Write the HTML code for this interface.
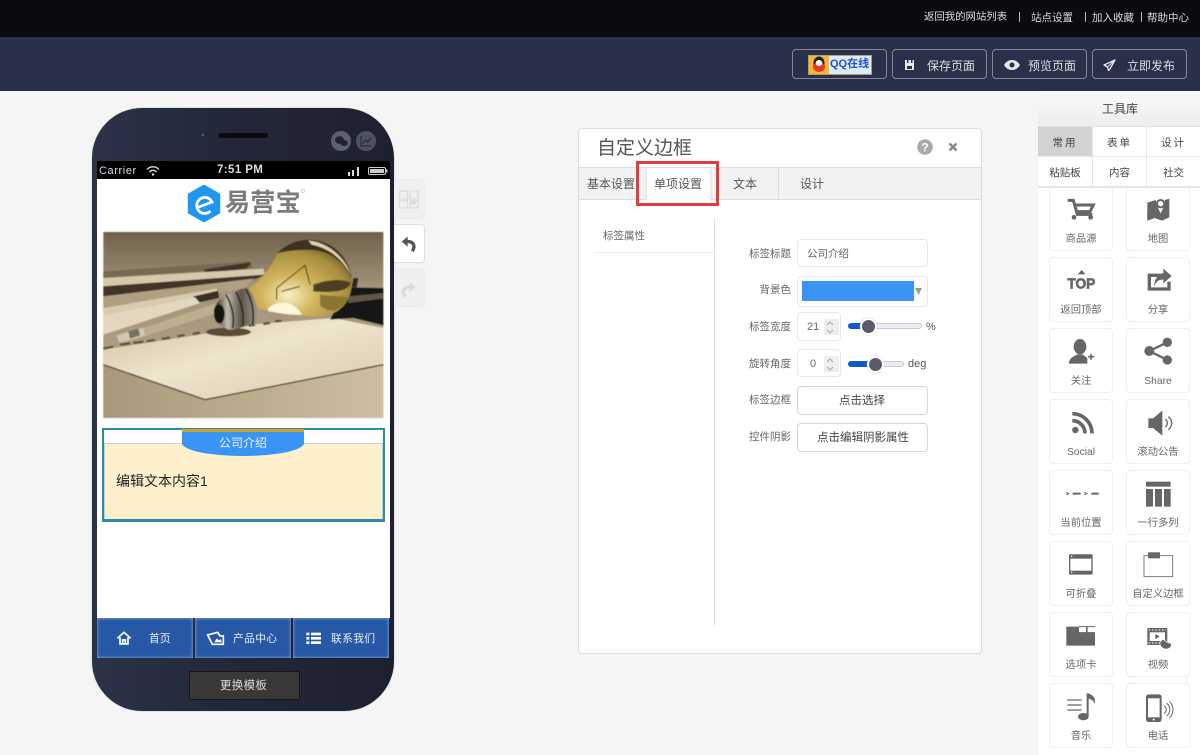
<!DOCTYPE html>
<html lang="zh">
<head>
<meta charset="utf-8">
<title>自定义边框</title>
<style>
*{box-sizing:border-box}
html,body{margin:0;padding:0}
body{position:relative;width:1200px;height:755px;overflow:hidden;background:#f5f5f5;font-family:"Liberation Sans","Noto Sans CJK SC",sans-serif;color:#555}
.a{position:absolute}
.t{position:absolute;white-space:nowrap;line-height:1}
.btn{position:absolute;top:49px;width:95px;height:30px;border:1px solid rgba(255,255,255,.42);border-radius:4px}
.lab{position:absolute;left:720px;width:71px;text-align:right;font-size:10.5px;color:#666;line-height:14px;white-space:nowrap}
.box{position:absolute;background:#fff;border:1px solid #e6e6e6;border-radius:4px}
.item{position:absolute;width:64px;height:65px;background:#fff;border:1px solid #efefef;border-radius:4px}
.item span{position:absolute;left:-4px;right:-4px;top:46px;text-align:center;font-size:10.3px;line-height:14px;color:#666;white-space:nowrap}
.tc{position:absolute;text-align:center;font-size:10.5px;color:#444;background:#fff;white-space:nowrap}
.nav{position:absolute;top:618px;height:40px;background:#2658a5;box-shadow:inset 0 0 3px #9db8df}
</style>
</head>
<body>

<!-- top bars -->
<div class="a" style="left:0;top:0;width:1200px;height:38px;background:#0a0b0e"></div>
<div class="a" style="left:0;top:37px;width:1200px;height:54px;background:#2b304a"></div>
<div class="t" style="left:924px;top:13px;font-size:10.4px;color:#ddd">返回我的网站列表</div>
<div class="t" style="left:1031px;top:13px;font-size:10.5px;color:#ddd">站点设置</div>
<div class="t" style="left:1092px;top:13px;font-size:10.5px;color:#ddd">加入收藏</div>
<div class="t" style="left:1147px;top:13px;font-size:10.5px;color:#ddd">帮助中心</div>
<div class="a" style="left:1019px;top:12px;width:1px;height:10px;background:#bbb"></div>
<div class="a" style="left:1085px;top:12px;width:1px;height:10px;background:#bbb"></div>
<div class="a" style="left:1141px;top:12px;width:1px;height:10px;background:#bbb"></div>

<div class="btn" style="left:792px"></div>
<div class="btn" style="left:892px"></div>
<div class="btn" style="left:992px"></div>
<div class="btn" style="left:1092px"></div>
<div class="a" style="left:808px;top:55px;width:64px;height:20px;background:#d8ecfa;border:1px solid #b0a070"></div>
<div class="a" style="left:809px;top:56px;width:20px;height:18px;background:#f4b73a"></div>
<div class="t" style="left:830px;top:59px;font-size:11px;font-weight:bold;color:#2c4fbd">QQ在线</div>
<div class="t" style="left:927px;top:60px;font-size:12px;color:#ddd">保存页面</div>
<div class="t" style="left:1028px;top:60px;font-size:12px;color:#ddd">预览页面</div>
<div class="t" style="left:1127px;top:60px;font-size:12px;color:#ddd">立即发布</div>

<!-- phone -->
<div class="a" style="left:92px;top:108px;width:302px;height:603px;border-radius:50px;background:linear-gradient(90deg,#2c3349 0%,#23283a 40%,#1d2030 100%);box-shadow:0 0 1px #888"></div>
<div class="a" style="left:97px;top:161px;width:293px;height:18px;background:#000"></div>
<div class="a" style="left:97px;top:179px;width:293px;height:439px;background:#fff"></div>
<div class="t" style="left:99px;top:166px;font-size:11px;color:#ddd;letter-spacing:.6px">Carrier</div>
<div class="t" style="left:217px;top:165px;font-size:11.5px;font-weight:bold;color:#ddd;letter-spacing:.4px">7:51 PM</div>

<!-- logo text -->
<div class="t" style="left:225px;top:191px;font-size:25px;font-weight:bold;color:#7b7b7b;letter-spacing:.3px">易营宝</div>

<!-- photo -->
<svg class="a" style="left:100px;top:228px" width="290" height="195" viewBox="0 0 870 585">
<defs>
<filter id="bl" x="-5%" y="-5%" width="110%" height="110%"><feGaussianBlur stdDeviation="1.8"/></filter>
<linearGradient id="bg" x1="0" y1="0" x2="0" y2="1"><stop offset="0" stop-color="#6f614a"/><stop offset=".3" stop-color="#a3947a"/><stop offset="1" stop-color="#b8a98c"/></linearGradient>
<linearGradient id="pp" x1="0" y1="0" x2="1" y2="1"><stop offset="0" stop-color="#cfc0a2"/><stop offset=".45" stop-color="#efe5cd"/><stop offset="1" stop-color="#d6c8ab"/></linearGradient>
<linearGradient id="tb" x1="0" y1="0" x2="1" y2="0"><stop offset="0" stop-color="#a9997a"/><stop offset="1" stop-color="#cdbea2"/></linearGradient>
<radialGradient id="bu" cx=".4" cy=".72" r=".75"><stop offset="0" stop-color="#fbf0c4"/><stop offset=".35" stop-color="#d2b45c"/><stop offset=".75" stop-color="#a88e3e"/><stop offset="1" stop-color="#5b4a24"/></radialGradient>
<linearGradient id="sc" x1="0" y1="0" x2="1" y2="0"><stop offset="0" stop-color="#1c1812"/><stop offset=".3" stop-color="#c4bba8"/><stop offset=".6" stop-color="#5c5648"/><stop offset="1" stop-color="#a89e88"/></linearGradient>
</defs>
<g filter="url(#bl)">
<rect x="10" y="12" width="840" height="558" fill="url(#bg)"/>
<rect x="10" y="400" width="840" height="170" fill="url(#tb)"/>
<polygon points="10,130 450,100 460,120 10,150" fill="#776a52"/>
<polygon points="310,125 455,102 440,122 320,135" fill="#3f3626"/>
<polygon points="10,150 490,122 495,140 10,175" fill="#d6c8aa"/>
<polygon points="10,175 495,140 470,152 10,205" fill="#3f3626"/>
<polygon points="10,205 460,152 430,185 10,240" fill="#b09f80"/>
<polygon points="10,240 350,182 358,195 10,262" fill="#d8cbae"/>
<polygon points="280,205 355,188 358,210 290,225" fill="#3a3226"/>
<polygon points="10,262 285,208 300,225 10,320" fill="#e3d8bf"/>
<polygon points="60,325 350,225 350,255 70,345" fill="#bdae90"/>
<polygon points="50,322 130,298 135,322 58,345" fill="#cfc6b3"/>
<polygon points="85,310 115,302 120,322 90,332" fill="#77705f"/>
<polygon points="10,365 300,320 450,290 700,270 850,300 850,410 315,515 10,410" fill="url(#pp)"/>
<polyline points="10,410 315,515 850,410" fill="none" stroke="#4b3f2a" stroke-width="4"/>
<polygon points="690,275 740,178 850,180 850,292 760,270" fill="#191714"/>
<polygon points="745,205 850,195 850,212 745,225" fill="#5f574a"/>
<polygon points="760,150 775,150 770,178 755,178" fill="#2d281f"/>
<ellipse cx="385" cy="312" rx="68" ry="13" fill="#5a4c34"/>
<path d="M10 362 l30 -6 M60 350 l30 -4 M100 345 l30 -4 M140 340 l25 -4 M185 333 l25 -4 M232 325 l22 -4 M278 318 l22 -4 M445 293 l20 -3 M490 288 l20 -3 M525 280 l20 -2" stroke="#5b4d35" stroke-width="7" fill="none"/>
<path d="M440 185C485 155 510 125 530 80C560 42 610 30 650 38C720 50 760 110 755 175C750 240 690 275 630 265C590 262 535 248 478 245C468 225 450 205 440 185Z" fill="url(#bu)"/>
<path d="M532 76C565 40 615 30 650 38C705 48 745 92 755 150C730 100 690 70 640 66C595 64 560 68 532 76Z" fill="#3d3220"/>
<path d="M625 38C680 42 735 85 752 140C725 92 690 62 635 50Z" fill="#e0d3aa"/>
<path d="M640 170C680 155 730 150 752 165C745 190 700 195 640 190Z" fill="#4d4020"/>
<path d="M660 200C695 205 730 205 745 208C725 245 695 262 660 232Z" fill="#8a7432"/>
<path d="M505 240C540 212 590 225 605 260C560 262 530 252 505 250Z" fill="#fff8de"/>
<path d="M530 180L615 112 630 170M530 180V215M545 190L600 175" stroke="#3a3018" stroke-width="3" fill="none"/>
<path d="M342 245C350 215 375 195 442 178C465 205 480 250 476 285C440 290 410 308 385 305C360 295 338 268 342 245Z" fill="url(#sc)"/>
<path d="M378 200C398 235 403 270 398 300M408 192C428 230 433 265 428 295M438 184C458 220 463 255 458 288" stroke="#2a251c" stroke-width="5" fill="none"/>
<ellipse cx="358" cy="258" rx="16" ry="28" fill="#17140f"/>
</g>
</svg>

<!-- tab component -->
<div class="a" style="left:102px;top:428px;width:283px;height:94px;border:2px solid #2a8da5;border-bottom-width:3px;background:#fff"></div>
<div class="a" style="left:104px;top:443px;width:279px;height:76px;background:#fff0cc;border:1px solid #c3cfe0;border-bottom:0"></div>
<div class="a" style="left:182px;top:429px;width:122px;height:27px;background:#3994f5;border-radius:0 0 61px 61px/0 0 13px 13px"></div>
<div class="a" style="left:182px;top:429px;width:122px;height:3px;background:#cda52a"></div>
<div class="t" style="left:219px;top:437px;font-size:12px;color:#eef5ff">公司介绍</div>
<div class="t" style="left:116px;top:474px;font-size:14px;color:#222">编辑文本内容1</div>

<!-- phone nav -->
<div class="nav" style="left:97px;width:96px"></div>
<div class="nav" style="left:195px;width:96px"></div>
<div class="nav" style="left:293px;width:96px"></div>
<div class="t" style="left:149px;top:634px;font-size:10.8px;color:#e8eef8">首页</div>
<div class="t" style="left:233px;top:634px;font-size:10.8px;color:#e8eef8;letter-spacing:.3px">产品中心</div>
<div class="t" style="left:331px;top:634px;font-size:10.8px;color:#e8eef8;letter-spacing:.3px">联系我们</div>

<div class="a" style="left:189px;top:671px;width:111px;height:29px;background:#3a3836;border:1px solid #15151a;border-radius:2px"></div>
<div class="t" style="left:220px;top:681px;font-size:11.5px;color:#ddd;letter-spacing:.3px">更换模板</div>

<!-- side buttons -->
<div class="a" style="left:394px;top:179px;width:31px;height:40px;background:#f0f0f0;border:1px solid #ebebeb;border-left:0;border-radius:0 4px 4px 0"></div>
<div class="a" style="left:394px;top:224px;width:31px;height:39px;background:#fff;border:1px solid #ddd;border-left:0;border-radius:0 4px 4px 0"></div>
<div class="a" style="left:394px;top:268px;width:31px;height:39px;background:#f0f0f0;border:1px solid #ebebeb;border-left:0;border-radius:0 4px 4px 0"></div>

<!-- dialog -->
<div class="a" style="left:578px;top:128px;width:404px;height:526px;background:#fff;border:1px solid #ddd;border-radius:4px"></div>
<div class="t" style="left:597px;top:139px;font-size:19px;color:#555">自定义边框</div>
<div class="a" style="left:579px;top:167px;width:402px;height:33px;background:#f2f2f2;border-top:1px solid #ddd;border-bottom:1px solid #ddd"></div>
<div class="a" style="left:778px;top:168px;width:1px;height:31px;background:#ddd"></div>
<div class="a" style="left:645px;top:168px;width:67px;height:32px;background:#fff;border-left:2px solid #e8e8e8;border-right:2px solid #e8e8e8"></div>
<div class="t" style="left:587px;top:178px;font-size:12px;color:#555">基本设置</div>
<div class="t" style="left:654px;top:178px;font-size:12px;color:#555">单项设置</div>
<div class="t" style="left:733px;top:178px;font-size:12px;color:#555">文本</div>
<div class="t" style="left:800px;top:178px;font-size:12px;color:#555">设计</div>
<div class="a" style="left:636px;top:161px;width:83px;height:45px;border:3px solid #e23c3c"></div>
<div class="t" style="left:603px;top:231px;font-size:10.5px;color:#666">标签属性</div>
<div class="a" style="left:595px;top:252px;width:119px;height:1px;background:#e8e8e8"></div>
<div class="a" style="left:714px;top:218px;width:1px;height:408px;background:#ddd"></div>

<div class="lab" style="top:247px">标签标题</div>
<div class="box" style="left:797px;top:239px;width:131px;height:28px"></div>
<div class="t" style="left:807px;top:249px;font-size:10.5px;color:#666">公司介绍</div>
<div class="lab" style="top:283px">背景色</div>
<div class="box" style="left:797px;top:276px;width:131px;height:31px"></div>
<div class="a" style="left:802px;top:281px;width:112px;height:20px;background:#3a94f5;border-radius:1px"></div>
<div class="lab" style="top:320px">标签宽度</div>
<div class="box" style="left:797px;top:312px;width:44px;height:29px"></div>
<div class="t" style="left:807px;top:322px;font-size:11px;color:#666">21</div>
<div class="a" style="left:824px;top:319px;width:15px;height:16px;background:#eee"></div>
<div class="lab" style="top:357px">旋转角度</div>
<div class="box" style="left:797px;top:349px;width:44px;height:28px"></div>
<div class="t" style="left:810px;top:359px;font-size:11px;color:#666">0</div>
<div class="a" style="left:824px;top:356px;width:15px;height:16px;background:#eee"></div>

<div class="a" style="left:848px;top:323px;width:74px;height:6px;background:#ececf2;border:1px solid #c9c9d4;border-radius:3px"></div>
<div class="a" style="left:848px;top:323px;width:20px;height:6px;background:#0f5cc8;border-radius:3px"></div>
<div class="a" style="left:860px;top:318px;width:17px;height:17px;background:#5a5a6b;border:2px solid #fff;border-radius:50%;box-shadow:0 0 1px #999"></div>
<div class="t" style="left:926px;top:322px;font-size:11px;color:#555">%</div>
<div class="a" style="left:848px;top:361px;width:56px;height:6px;background:#ececf2;border:1px solid #c9c9d4;border-radius:3px"></div>
<div class="a" style="left:848px;top:361px;width:27px;height:6px;background:#0f5cc8;border-radius:3px"></div>
<div class="a" style="left:867px;top:356px;width:17px;height:17px;background:#5a5a6b;border:2px solid #fff;border-radius:50%;box-shadow:0 0 1px #999"></div>
<div class="t" style="left:908px;top:359px;font-size:11px;color:#555">deg</div>

<div class="lab" style="top:393px">标签边框</div>
<div class="box" style="left:797px;top:386px;width:131px;height:29px;border-color:#d5d5d5"></div>
<div class="t" style="left:839px;top:396px;font-size:11.5px;color:#444">点击选择</div>
<div class="lab" style="top:430px">控件阴影</div>
<div class="box" style="left:797px;top:423px;width:131px;height:29px;border-color:#d5d5d5"></div>
<div class="t" style="left:817px;top:433px;font-size:11.5px;color:#444">点击编辑阴影属性</div>

<!-- tool panel -->
<div class="a" style="left:1038px;top:91px;width:162px;height:664px;background:#fff"></div>
<div class="a" style="left:1038px;top:91px;width:162px;height:36px;background:linear-gradient(#f8f8f8,#eeeeee);border-bottom:1px solid #e2e2e2"></div>
<div class="t" style="left:1102px;top:103px;font-size:12px;color:#444">工具库</div>
<div class="a" style="left:1038px;top:127px;width:162px;height:61px;background:#e6e6e6"></div>
<div class="tc" style="left:1038px;top:127px;width:54px;height:29px;line-height:33px;background:#d2d2d2;letter-spacing:2px">常用</div>
<div class="tc" style="left:1093px;top:127px;width:53px;height:29px;line-height:33px;letter-spacing:2px">表单</div>
<div class="tc" style="left:1147px;top:127px;width:53px;height:29px;line-height:33px;letter-spacing:2px">设计</div>
<div class="tc" style="left:1038px;top:157px;width:54px;height:30px;line-height:33px">粘贴板</div>
<div class="tc" style="left:1093px;top:157px;width:53px;height:30px;line-height:33px">内容</div>
<div class="tc" style="left:1147px;top:157px;width:53px;height:30px;line-height:33px">社交</div>

<div class="item" style="left:1049px;top:186px"><span>商品源</span></div>
<div class="item" style="left:1126px;top:186px"><span>地图</span></div>
<div class="item" style="left:1049px;top:257px"><span>返回顶部</span></div>
<div class="item" style="left:1126px;top:257px"><span>分享</span></div>
<div class="item" style="left:1049px;top:328px"><span>关注</span></div>
<div class="item" style="left:1126px;top:328px"><span>Share</span></div>
<div class="item" style="left:1049px;top:399px"><span>Social</span></div>
<div class="item" style="left:1126px;top:399px"><span>滚动公告</span></div>
<div class="item" style="left:1049px;top:470px"><span>当前位置</span></div>
<div class="item" style="left:1126px;top:470px"><span>一行多列</span></div>
<div class="item" style="left:1049px;top:541px"><span>可折叠</span></div>
<div class="item" style="left:1126px;top:541px"><span>自定义边框</span></div>
<div class="item" style="left:1049px;top:612px"><span>选项卡</span></div>
<div class="item" style="left:1126px;top:612px"><span>视频</span></div>
<div class="item" style="left:1049px;top:683px"><span>音乐</span></div>
<div class="item" style="left:1126px;top:683px"><span>电话</span></div>
<div class="a" style="left:1038px;top:186px;width:162px;height:2px;background:#e6e6e6"></div>

<!-- icon overlay, all in page coordinates -->
<svg class="a" style="left:0;top:0;pointer-events:none" width="1200" height="755" viewBox="0 0 1200 755">
<!-- header icons -->
<g fill="#e8e8e8">
<path d="M905 60h9v10h-9z"/><path d="M907 60h1.500v3h-1.500zM911 60h1.500v3h-1.500z" fill="#2b304a"/><path d="M907 66h5v3h-5z" fill="#2b304a"/>
<path d="M1004 65c2-3.500 5-5 8-5s6 1.500 8 5c-2 3.500-5 5-8 5s-6-1.500-8-5z"/>
<circle cx="1012" cy="65" r="2.500" fill="#2b304a"/>
</g>
<path d="M1115 60l-11 5 3.500 2 1 3.500 2-2.500z" fill="none" stroke="#e8e8e8" stroke-width="1.300" stroke-linejoin="round"/>
<path d="M1115 60l-7.500 7" stroke="#e8e8e8" stroke-width="1"/>
<!-- QQ penguin -->
<ellipse cx="819" cy="63" rx="5.500" ry="6.500" fill="#222"/>
<ellipse cx="819" cy="67" rx="6" ry="5" fill="#e33a24"/>
<ellipse cx="819" cy="63" rx="3.300" ry="3" fill="#fff"/>

<!-- phone top -->
<circle cx="203" cy="135" r="2.500" fill="#2c2a55"/>
<circle cx="203" cy="135" r="1" fill="#6060a8"/>
<rect x="218" y="133" width="50" height="5" rx="2.500" fill="#0a0a0f"/>
<circle cx="341" cy="141" r="10" fill="#5b6070"/>
<circle cx="366" cy="141" r="10" fill="#4d5262"/>
<ellipse cx="339.500" cy="140" rx="4.500" ry="3.800" fill="#20232e"/>
<ellipse cx="344" cy="143" rx="3.800" ry="3" fill="#20232e"/>
<path d="M361 136v10h10M362.500 144l3-4 2 2 3.500-4" fill="none" stroke="#20232e" stroke-width="1"/>

<!-- status icons -->
<path d="M147 169.500a8 8 0 0 1 12 0M149.500 172a4.500 4.500 0 0 1 7 0" fill="none" stroke="#ddd" stroke-width="1.300"/>
<circle cx="153" cy="174.500" r="1.200" fill="#ddd"/>
<rect x="348" y="172" width="2" height="4" fill="#ddd"/>
<rect x="352" y="170" width="2" height="6" fill="#ddd"/>
<rect x="357" y="167" width="2" height="9" fill="#ddd"/>
<rect x="368.500" y="167.500" width="17" height="7" rx="1.500" fill="none" stroke="#ccc"/>
<rect x="370" y="169" width="14" height="4" fill="#ccc"/>
<rect x="386" y="169.500" width="1.500" height="3" fill="#ccc"/>

<!-- logo -->
<polygon points="204,186 219,194.500 219,212.500 204,221 189,212.500 189,194.500" fill="#2196f0" stroke="#2196f0" stroke-width="2.500" stroke-linejoin="round"/>
<path d="M197.500 207.500L212 202A8 8 0 1 0 210.500 211" fill="none" stroke="#fff" stroke-width="2.800"/>
<circle cx="303" cy="191" r="1.800" fill="none" stroke="#bbb" stroke-width=".6"/>

<!-- phone nav icons (zoom coords) -->
<g transform="translate(85 400) scale(.3333)">
<path d="M97 715L117 697 137 715M105 712V732H129V712M113 732V720H121V732" fill="none" stroke="#fff" stroke-width="5"/>
<path d="M368 705L398 697 405 708H415V733H382L378 725z" fill="none" stroke="#fff" stroke-width="5"/>
<path d="M388 727L396 715 402 722 406 717 411 727z" fill="#fff"/>
<g fill="#fff"><rect x="664" y="698" width="9" height="8"/><rect x="678" y="698" width="30" height="8"/><rect x="664" y="711" width="9" height="8"/><rect x="678" y="711" width="30" height="8"/><rect x="664" y="724" width="9" height="8"/><rect x="678" y="724" width="30" height="8"/></g>
</g>

<!-- side button icons -->
<g transform="translate(385 170) scale(.3333)">
<g fill="none" stroke="#d8d8d8" stroke-width="3"><rect x="44" y="63" width="24" height="24"/><rect x="75" y="63" width="24" height="24"/><rect x="44" y="92" width="24" height="22"/><rect x="75" y="92" width="24" height="22"/></g>
<rect x="78" y="95" width="14" height="8" fill="#d8d8d8"/>
<polygon points="50,215 68,200 68,230" fill="#555"/>
<path d="M62 215C82 212 94 224 82 244" fill="none" stroke="#555" stroke-width="10"/>
<polygon points="92,351 74,336 74,366" fill="#dcdcdc"/>
<path d="M80 351C60 348 48 360 60 380" fill="none" stroke="#dcdcdc" stroke-width="10"/>
</g>

<!-- dialog icons -->
<circle cx="925" cy="147" r="7.800" fill="#aaa"/>
<text x="925" y="151.500" text-anchor="middle" font-family="Liberation Sans" font-weight="bold" font-size="12" fill="#fff">?</text>
<path d="M949.500 143.500l7 7M956.500 143.500l-7 7" stroke="#888" stroke-width="2.400"/>
<path d="M915 288h7l-3.500 7z" fill="#999"/>
<g fill="none" stroke="#aaa" stroke-width="1"><path d="M827 325l3-3 3 3M827 330l3 3 3-3M827 362l3-3 3 3M827 367l3 3 3-3"/></g>

<!-- tool icons -->
<g transform="translate(1030 90) scale(.3333)" fill="#666">
<path d="M113 331H130L142 373H187" fill="none" stroke="#666" stroke-width="9"/>
<path d="M135 345H190L180 365H140" fill="none" stroke="#666" stroke-width="9"/>
<circle cx="132" cy="382" r="7"/><circle cx="182" cy="382" r="7"/>
<path d="M352 338L377 330 382 350 392 370 401 350 405 330 418 326V382L396 392 374 384 352 392z"/>
<circle cx="392" cy="341" r="11" fill="none" stroke="#666" stroke-width="6"/>
<path d="M352 338L352 362C365 365 378 372 392 390L374 384 352 392z"/>
<polygon points="155,540 167,553 143,553"/>
<text x="112" y="595" font-family="Liberation Sans" font-weight="bold" font-size="44" textLength="84" lengthAdjust="spacingAndGlyphs" stroke="#666" stroke-width="2">TOP</text>
<path d="M395 556H358V597H417V575" fill="none" stroke="#666" stroke-width="10"/>
<path d="M400 536L425 558 400 580V569C388 568 378 573 372 590 373 568 384 552 400 549z"/>
</g>
<g transform="translate(1030 325) scale(.3333)" fill="#666">
<ellipse cx="150" cy="65" rx="19" ry="23"/>
<path d="M117 116C117 98 132 94 142 88H158C162 92 168 95 172 99V116z"/>
<path d="M183 87V104M174 95H193" stroke="#666" stroke-width="5"/>
<circle cx="412" cy="52" r="14"/><circle cx="358" cy="78" r="15"/><circle cx="412" cy="105" r="14"/>
<path d="M412 52L358 78 412 105" fill="none" stroke="#666" stroke-width="7"/>
<circle cx="136" cy="315" r="9.500"/>
<path d="M127 287A38 38 0 0 1 165 325M127 266A59 59 0 0 1 186 325" fill="none" stroke="#666" stroke-width="11"/>
<path d="M355 280H369L397 257V332L369 309H355z"/>
<path d="M406 282A15 15 0 0 1 406 306M415 275A24 24 0 0 1 415 314" fill="none" stroke="#666" stroke-width="4"/>
<path d="M108 502L116 506 108 510M163 502L171 506 163 510" fill="none" stroke="#666" stroke-width="3"/>
<rect x="128" y="503" width="24" height="6"/><rect x="184" y="503" width="22" height="6"/>
<rect x="348" y="470" width="74" height="15"/><rect x="348" y="492" width="21" height="53"/><rect x="375" y="492" width="21" height="53"/><rect x="402" y="492" width="20" height="53"/>
</g>
<g transform="translate(1030 535) scale(.3333)" fill="#666">
<rect x="119" y="60" width="67" height="57" rx="3" fill="none" stroke="#666" stroke-width="4"/>
<rect x="118" y="58" width="69" height="13"/><rect x="118" y="107" width="69" height="11"/>
<circle cx="125" cy="64" r="2" fill="#fff"/><circle cx="125" cy="112" r="2" fill="#fff"/>
<rect x="342" y="62" width="86" height="63" fill="none" stroke="#666" stroke-width="2.500"/>
<rect x="354" y="52" width="36" height="18"/>
<rect x="109" y="275" width="86" height="57"/>
<rect x="147" y="273" width="22" height="20" fill="#fff"/><rect x="173" y="273" width="23" height="20" fill="#fff"/>
<path d="M147 275H195" stroke="#666" stroke-width="3"/>
<path d="M147 293H195M170 275V293" stroke="#666" stroke-width="3"/>
<rect x="352" y="279" width="60" height="51"/>
<rect x="359" y="292" width="46" height="26" fill="#fff"/>
<polygon points="376,297 376,312 389,304.500"/>
<path d="M356 285H408M356 324H408" stroke="#fff" stroke-width="3" stroke-dasharray="5 5"/>
<path d="M390 322L398 312 412 322 424 326C426 338 415 344 405 342 395 340 388 332 390 322z" stroke="#fff" stroke-width="2"/>
<path d="M112 495H155M112 510H155M112 525H155" stroke="#666" stroke-width="3.500"/>
<ellipse cx="160" cy="545" rx="16" ry="11"/>
<rect x="170" y="475" width="6" height="70"/>
<path d="M175 475C190 480 197 490 195 506 190 497 184 492 175 491z"/>
<rect x="348" y="478" width="47" height="83" rx="8"/>
<rect x="354" y="490" width="35" height="57" fill="#fff"/>
<circle cx="371" cy="554" r="3" fill="#fff"/>
<path d="M402 512A14 14 0 0 1 402 536M410 505A24 24 0 0 1 410 543M418 499A34 34 0 0 1 418 549" fill="none" stroke="#666" stroke-width="3"/>
</g>
</svg>
</body>
</html>
